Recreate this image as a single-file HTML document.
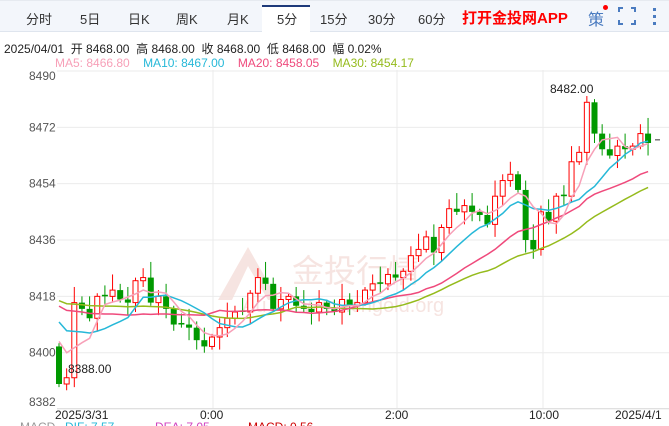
<!DOCTYPE html>
<html><head><meta charset="utf-8"><style>
*{margin:0;padding:0;box-sizing:border-box}
body{width:669px;height:426px;overflow:hidden;background:#fff;font-family:"Liberation Sans","Noto Sans CJK SC",sans-serif;position:relative}
.bar{position:absolute;left:0;top:0;width:669px;height:32px;background:#f3f6fb;border-bottom:1px solid #dfe5ee;border-top:1px solid #e6eaf0}
.t{position:absolute;top:9px;font-size:13px;color:#333}
.act{position:absolute;left:262px;top:5px;width:48px;height:28px;background:#fff;border-top:2px solid #1e3a7a}
.abs{position:absolute;white-space:nowrap}
</style></head><body>
<div class="bar"></div>
<div class="act"></div>
<div class="t" style="left:26px">分时</div>
<div class="t" style="left:80px">5日</div>
<div class="t" style="left:128px">日K</div>
<div class="t" style="left:176px">周K</div>
<div class="t" style="left:227px">月K</div>
<div class="t" style="left:277px">5分</div>
<div class="t" style="left:320px">15分</div>
<div class="t" style="left:368px">30分</div>
<div class="t" style="left:418px">60分</div>
<div class="t" style="left:462px;top:7px;font-size:15px;font-weight:bold;color:#f00">打开金投网APP</div>
<div class="t" style="left:588px;top:6px;font-size:16px;color:#4a7bc0">策</div>
<div class="abs" style="left:603px;top:5px;width:5px;height:5px;border-radius:50%;background:#f00"></div>
<svg class="abs" style="left:618px;top:7px" width="18" height="18"><path d="M1 5V1H5M13 1H17V5M17 13V17H13M5 17H1V13" fill="none" stroke="#4a7bc0" stroke-width="2"/></svg>
<svg class="abs" style="left:652px;top:7px" width="6" height="18"><rect x="1" y="1" width="3" height="3" fill="#4a7bc0"/><rect x="1" y="8" width="3" height="3" fill="#4a7bc0"/><rect x="1" y="15" width="3" height="3" fill="#4a7bc0"/></svg>
<div class="abs" style="left:4px;top:40px;font-size:12px;color:#222">2025/04/01&nbsp; 开 8468.00&nbsp; 高 8468.00&nbsp; 收 8468.00&nbsp; 低 8468.00&nbsp; 幅 0.02%</div>
<div class="abs" style="left:55px;top:56px;font-size:12px"><span style="color:#f7a0b8">MA5: 8466.80</span>&nbsp;&nbsp;&nbsp;&nbsp;<span style="color:#26b8d8">MA10: 8467.00</span>&nbsp;&nbsp;&nbsp;&nbsp;<span style="color:#ef4a7c">MA20: 8458.05</span>&nbsp;&nbsp;&nbsp;&nbsp;<span style="color:#95bb1c">MA30: 8454.17</span></div>
<svg id="c" class="abs" style="left:0;top:0" width="669" height="426"></svg>
<script>
var s='';
function Y(p){return 71+(8490-p)*3.13}
var labs=[8490,8472,8454,8436,8418,8400,8382];
labs.forEach(function(p,i){var y=Y(p);s+='<line x1="57" x2="669" y1="'+y+'" y2="'+y+'" stroke="#ebebeb"/>';
var ty=i==0?y+9:(i==6?y-3:y+4);s+='<text x="29" y="'+ty+'" font-size="12" fill="#555">'+p+'</text>';});
[213,397,543].forEach(function(x){s+='<line x1="'+x+'" x2="'+x+'" y1="70" y2="408" stroke="#ebebeb"/>';});
s+='<line x1="57" x2="669" y1="408.5" y2="408.5" stroke="#e0e0e0"/>';
// watermark
s+='<g fill="#f6e2de" opacity="0.9"><path d="M218 300 L248 247 L278 300 L268 300 L248 266 L232 300Z"/><text x="292" y="282" font-size="32" font-family="Noto Sans CJK SC">金投行情</text><text x="242" y="312" font-size="20">Au</text><text x="303" y="312" font-size="20">www.cngold.org</text></g>';
var cl=[8390,8392,8416,8414,8411,8418,8418,8420,8417,8416,8423,8424,8416,8418,8414,8409,8409,8408,8404,8402,8405,8408,8411,8413,8413,8419,8424,8422,8414,8417,8418,8415,8414,8413,8416,8414,8413,8417,8415,8416,8420,8422,8422,8425,8424,8426,8431,8433,8437,8432,8440,8446,8445,8447,8445,8444,8441,8450,8455,8457,8452,8436,8433,8445,8442,8450,8450,8461,8464,8480,8470,8465,8463,8466,8465,8466,8470,8467];
var pre=[];for(var i=0;i<30;i++)pre.push(i<22?8420:8420-(i-21)*2);
var all=pre.concat(cl);
function ma(n,col){var d='';for(var i=0;i<cl.length;i++){var k=i+30,sm=0;for(var j=k-n+1;j<=k;j++)sm+=all[j];var x=59+i*7.65;d+=(i?'L':'M')+x.toFixed(1)+' '+Y(sm/n).toFixed(1);}
s+='<path d="'+d+'" fill="none" stroke="'+col+'" stroke-width="1.5"/>';}
var op=8402;
for(var i=0;i<cl.length;i++){var o=i?cl[i-1]:op,c=cl[i];if(o==c)o=c+0.5;var x=59+i*7.65;
var hi=Math.max(o,c)+((i*7)%5)+1,lo=Math.min(o,c)-((i*3)%4)-1;if(i==69)hi=8482;if(i==1)lo=8388;
var up=c>o,col=up?'#f00':'#090';s+='<line x1="'+x+'" x2="'+x+'" y1="'+Y(hi)+'" y2="'+Y(lo)+'" stroke="'+col+'"/>';
var t=Y(Math.max(o,c)),h=Math.max(1,Y(Math.min(o,c))-t);
s+=up?'<rect x="'+(x-2.5)+'" y="'+t+'" width="5" height="'+h+'" fill="#fff" stroke="#f00"/>':'<rect x="'+(x-3)+'" y="'+t+'" width="6" height="'+h+'" fill="#090"/>';}
ma(30,'#95bb1c');ma(20,'#ef4a7c');ma(10,'#26b8d8');ma(5,'#f7a0b8');
s+='<text x="550" y="93" font-size="12" fill="#222">8482.00</text><text x="68" y="373" font-size="12" fill="#222">8388.00</text>';
s+='<line x1="655" x2="660" y1="'+Y(8468)+'" y2="'+Y(8468)+'" stroke="#333"/>';
[['2025/3/31',55],['0:00',200],['2:00',385],['10:00',529],['2025/4/1',615]].forEach(function(a){s+='<text x="'+a[1]+'" y="419" font-size="12" fill="#222">'+a[0]+'</text>';});
s+='<text x="20" y="431" font-size="12" fill="#999">MACD</text><text x="65" y="431" font-size="12" fill="#26b8d8">DIF: 7.57</text><text x="155" y="431" font-size="12" fill="#d040c0">DEA: 7.05</text><text x="248" y="431" font-size="12" fill="#c00">MACD: 0.56</text>';
document.getElementById('c').innerHTML=s;
</script>
</body></html>
